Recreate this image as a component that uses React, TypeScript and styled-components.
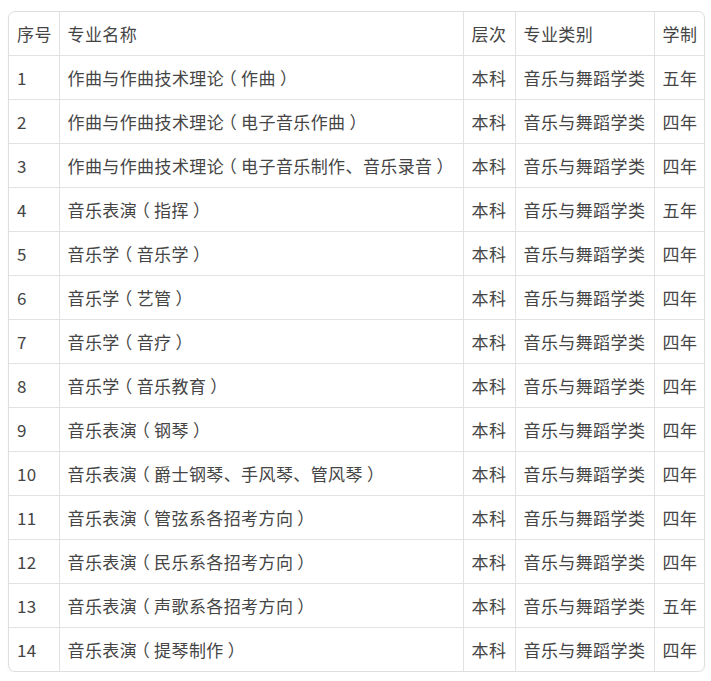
import React from "react";
import styled, { createGlobalStyle } from "styled-components";

const rows: [string, string, string, string, string][] = [
  ["1", "作曲与作曲技术理论（作曲）", "本科", "音乐与舞蹈学类", "五年"],
  ["2", "作曲与作曲技术理论（电子音乐作曲）", "本科", "音乐与舞蹈学类", "四年"],
  ["3", "作曲与作曲技术理论（电子音乐制作、音乐录音）", "本科", "音乐与舞蹈学类", "四年"],
  ["4", "音乐表演（指挥）", "本科", "音乐与舞蹈学类", "五年"],
  ["5", "音乐学（音乐学）", "本科", "音乐与舞蹈学类", "四年"],
  ["6", "音乐学（艺管）", "本科", "音乐与舞蹈学类", "四年"],
  ["7", "音乐学（音疗）", "本科", "音乐与舞蹈学类", "四年"],
  ["8", "音乐学（音乐教育）", "本科", "音乐与舞蹈学类", "四年"],
  ["9", "音乐表演（钢琴）", "本科", "音乐与舞蹈学类", "四年"],
  ["10", "音乐表演（爵士钢琴、手风琴、管风琴）", "本科", "音乐与舞蹈学类", "四年"],
  ["11", "音乐表演（管弦系各招考方向）", "本科", "音乐与舞蹈学类", "四年"],
  ["12", "音乐表演（民乐系各招考方向）", "本科", "音乐与舞蹈学类", "四年"],
  ["13", "音乐表演（声歌系各招考方向）", "本科", "音乐与舞蹈学类", "五年"],
  ["14", "音乐表演（提琴制作）", "本科", "音乐与舞蹈学类", "四年"],
];

const widths = [50, 404, 52, 139, 52];

// full-width brackets are drawn centred in their em box, like the original font
function withParens(text: string) {
  return text.split(/([（）])/).map((part, i) =>
    part === "（" || part === "）" ? <Paren key={i}>{part}</Paren> : part
  );
}

function App() {
  return (
    <>
      <GlobalStyle />
      <Card>
        <Table>
          <colgroup>
            {widths.map((w, i) => (
              <col key={i} style={{ width: w }} />
            ))}
          </colgroup>
          <thead>
            <tr>
              <Cell as="th">序号</Cell>
              <Cell as="th">专业名称</Cell>
              <Cell as="th">层次</Cell>
              <Cell as="th">专业类别</Cell>
              <Cell as="th">学制</Cell>
            </tr>
          </thead>
          <tbody>
            {rows.map((r) => (
              <tr key={r[0]}>
                {r.map((c, i) => (
                  <Cell key={i}>{withParens(c)}</Cell>
                ))}
              </tr>
            ))}
          </tbody>
        </Table>
      </Card>
    </>
  );
}

export default App;

const GlobalStyle = createGlobalStyle`
  body {
    margin: 0;
    background: #ffffff;
    font-family: "Noto Sans CJK SC", "Noto Sans", sans-serif;
  }
`;

const Card = styled.div`
  margin: 11px 0 0 8px;
  width: 697px;
  border: 1px solid #dedede;
  border-radius: 7px;
  overflow: hidden;
  box-shadow: 0 1px 2px rgba(0, 0, 0, 0.06);
  box-sizing: border-box;
`;

const Table = styled.table`
  width: 100%;
  table-layout: fixed;
  border-collapse: collapse;
`;

const Cell = styled.td`
  height: 43px;
  padding: 0 0 0 8px;
  font-size: 17px;
  font-weight: 400;
  color: #454545;
  text-align: left;
  white-space: nowrap;
  border-left: 1px solid #e2e2e2;
  border-bottom: 1px solid #e2e2e2;
  letter-spacing: 0.4px;

  &:first-child {
    border-left: none;
  }
  tbody tr:last-child > & {
    border-bottom: none;
  }
`;

const Paren = styled.span`
  display: inline-block;
  width: 1em;
  text-align: center;
  font-feature-settings: "halt";
`;
